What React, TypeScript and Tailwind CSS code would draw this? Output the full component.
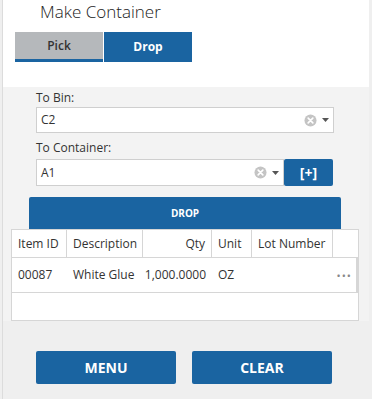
import React from "react";

const font = { fontFamily: '"Open Sans", "Noto Sans", Arial, sans-serif' };

function ClearIcon() {
  return (
    <svg width="13" height="13" viewBox="0 0 14 14">
      <circle cx="7" cy="7" r="6.5" fill="#c4c4c4" />
      <path d="M4.5 4.5 L9.5 9.5 M9.5 4.5 L4.5 9.5" stroke="#fff" strokeWidth="1.8" strokeLinecap="round" />
    </svg>
  );
}

function Caret() {
  return (
    <svg width="7" height="4" viewBox="0 0 7 4">
      <path d="M0 0 L7 0 L3.5 4 Z" fill="#555" />
    </svg>
  );
}

function Combo({ value, className }: { value: string; className: string }) {
  return (
    <div className={`flex items-center bg-white border border-[#cfcfcf] ${className}`}>
      <span className="flex-1 pl-[4px] text-[12px] text-[#333]">{value}</span>
      <ClearIcon />
      <span className="ml-[5px] mr-[4px] flex items-center">
        <Caret />
      </span>
    </div>
  );
}

export default function App() {
  return (
    <div className="w-[372px] h-[399px] bg-[#efefef] flex overflow-hidden" style={font}>
      <div className="ml-[2px] w-[367px] border-l border-[#dcdcdc] flex flex-col">
        <div className="h-[87px] bg-white flex flex-col">
          <div className="pl-[37px] pt-[0px] text-[17px] leading-[24px] font-light text-[#222]">Make Container</div>
          <div className="flex mt-[8px] pl-[12px]">
            <div className="w-[88px] h-[30px] bg-[#b5b8bb] border-b-[3px] border-[#1a64a1] flex items-center justify-center text-[12px] font-semibold text-[#333]">
              Pick
            </div>
            <div className="w-[88px] h-[30px] ml-[1px] bg-[#1a64a1] flex items-center justify-center text-[12px] font-bold text-white">
              Drop
            </div>
          </div>
        </div>
        <div className="flex-1 bg-[#f3f3f3] flex flex-col">
          <div className="pl-[33px] pr-[36px] flex flex-col">
            <div className="mt-[3px] text-[12px] leading-[16px] text-[#333]">To Bin:</div>
            <Combo value="C2" className="mt-[1px] h-[26px] w-[298px]" />
            <div className="mt-[7px] text-[12px] leading-[16px] text-[#333]">To Container:</div>
            <div className="flex mt-[3px]">
              <Combo value="A1" className="h-[27px] w-[248px]" />
              <div className="w-[49px] h-[27px] bg-[#1a64a1] rounded-[2px] flex items-center justify-center text-white font-bold text-[14px]">
                [+]
              </div>
            </div>
          </div>
          <div className="mt-[11px] ml-[26px] w-[312px] h-[32px] bg-[#1a64a1] rounded-t-[2px] flex items-center justify-center text-white font-bold text-[10px]">
            DROP
          </div>
          <div className="ml-[8px] w-[348px] h-[92px] bg-white border border-[#d6d6d6] flex flex-col">
            <div className="flex h-[28px] border-b border-[#d6d6d6] text-[12px] text-[#333]">
              <div className="w-[55px] border-r border-[#d6d6d6] flex items-center pl-[6px]">Item ID</div>
              <div className="w-[76px] border-r border-[#d6d6d6] flex items-center pl-[6px]">Description</div>
              <div className="w-[69px] border-r border-[#d6d6d6] flex items-center justify-end pr-[6px]">Qty</div>
              <div className="w-[40px] border-r border-[#d6d6d6] flex items-center pl-[6px]">Unit</div>
              <div className="w-[81px] border-r border-[#d6d6d6] flex items-center pl-[6px]">Lot Number</div>
              <div className="flex-1" />
            </div>
            <div className="flex h-[35px] border-b border-r-[2px] border-[#d6d6d6] text-[12px] text-[#333] items-center">
              <div className="w-[55px] pl-[6px]">00087</div>
              <div className="w-[76px] pl-[6px]">White Glue</div>
              <div className="w-[69px] text-right pr-[6px]">1,000.0000</div>
              <div className="w-[40px] pl-[6px]">OZ</div>
              <div className="w-[81px]" />
              <div className="flex-1 text-right pr-[4px] text-[#888] text-[11px] tracking-[1px] leading-none">•••</div>
            </div>
            <div className="flex-1" />
          </div>
          <div className="flex-1 bg-[#efefef] flex items-start pt-[30px] pl-[33px] gap-[16px]">
            <div className="w-[140px] h-[33px] bg-[#1a64a1] rounded-[2px] flex items-center justify-center text-white font-bold text-[14px]">
              MENU
            </div>
            <div className="w-[140px] h-[33px] bg-[#1a64a1] rounded-[2px] flex items-center justify-center text-white font-bold text-[14px]">
              CLEAR
            </div>
          </div>
        </div>
      </div>
    </div>
  );
}
